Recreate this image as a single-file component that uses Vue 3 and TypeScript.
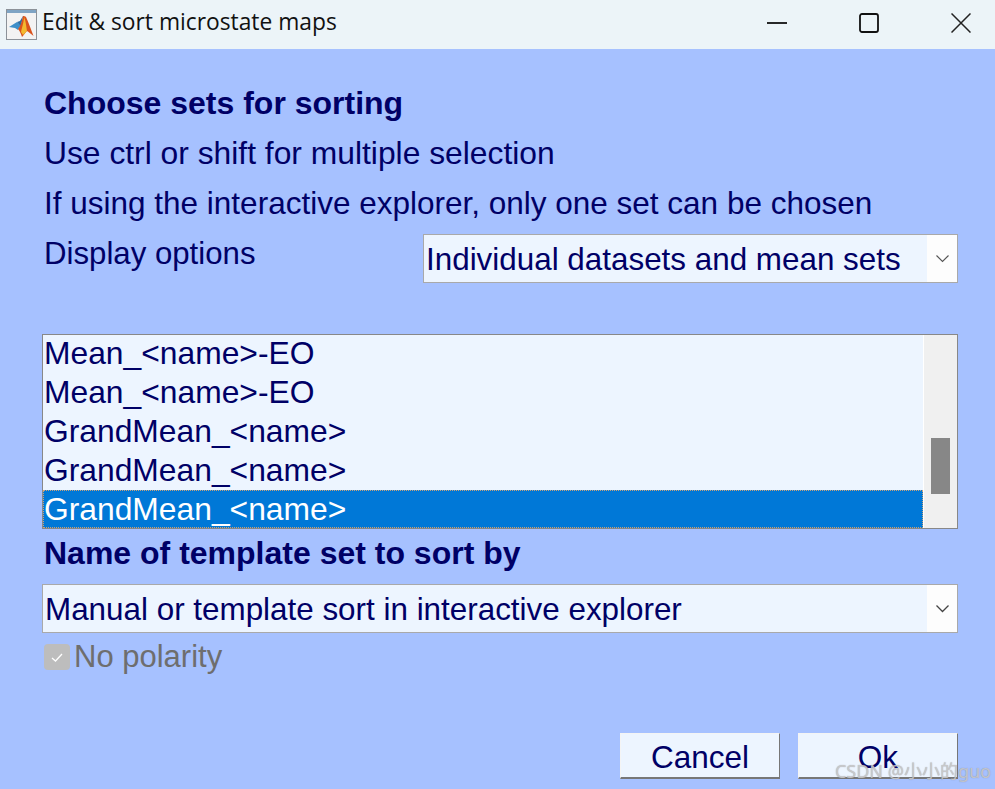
<template>
  <div class="window">
    <header class="titlebar">
      <svg class="app-icon" width="31" height="31" viewBox="0 0 31 31">
        <rect x="0.5" y="0.5" width="30" height="30" fill="#f3f3f3" stroke="#8c9299" />
        <rect x="1" y="1" width="29" height="3" fill="#7fa4c4" />
        <path d="M3 18 L11 13 L15 16 L12 21 L9 19 Z" fill="#3d8fc9" />
        <path d="M11 13 L14 12 L17 7 L15 17 Z" fill="#2c6ea6" />
        <path d="M17 7 C18 7 19 7 20 8 C22 12 25 20 27.500 27 C25 25 23 23 21 22 C19 24 18 26 16 28 C15 25 14 22 12 20 C15 17 16 11 17 7 Z" fill="#d9531e" />
        <path d="M18 8 C18 12 16 19 15 23 L17 26 C19 24 20 23 21 22 C20 17 20 12 18 8 Z" fill="#f3b92f" />
      </svg>
      <span class="title">Edit &amp; sort microstate maps</span>
      <div class="controls">
        <svg width="20" height="20" viewBox="0 0 20 20"><path d="M0 10 H20" stroke="#111" stroke-width="1.800" /></svg>
        <svg width="20" height="20" viewBox="0 0 20 20"><rect x="1" y="1" width="18" height="18" rx="2" fill="none" stroke="#111" stroke-width="1.800" /></svg>
        <svg width="20" height="20" viewBox="0 0 20 20"><path d="M0.500 0.500 L19.500 19.500 M19.500 0.500 L0.500 19.500" stroke="#222" stroke-width="1.500" /></svg>
      </div>
    </header>

    <main class="content">
      <div class="line bold">Choose sets for sorting</div>
      <div class="line wider">Use ctrl or shift for multiple selection</div>
      <div class="line">If using the interactive explorer, only one set can be chosen</div>

      <div class="options-row">
        <div class="line label">Display options</div>
        <div class="select small">
          <span class="value">Individual datasets and mean sets</span>
          <span class="arrow">
            <svg width="13" height="8" viewBox="0 0 13 8"><path d="M0.500 0.500 L6.500 6.500 L12.500 0.500" fill="none" stroke="#555" stroke-width="1.100" /></svg>
          </span>
        </div>
      </div>

      <div class="listbox">
        <ul class="items">
          <li v-for="(item, i) in items" :key="i" :class="{ selected: i === items.length - 1 }">{{ item }}</li>
        </ul>
        <div class="scrollbar"><div class="thumb"></div></div>
      </div>

      <div class="line bold template-label">Name of template set to sort by</div>

      <div class="select wide">
        <span class="value">Manual or template sort in interactive explorer</span>
        <span class="arrow">
          <svg width="13" height="8" viewBox="0 0 13 8"><path d="M0.500 0.500 L6.500 6.500 L12.500 0.500" fill="none" stroke="#444" stroke-width="1.300" /></svg>
        </span>
      </div>

      <div class="check-row">
        <span class="checkbox">
          <svg width="14" height="11" viewBox="0 0 14 11"><path d="M2 6 L5.500 9 L12 2" fill="none" stroke="#fff" stroke-width="1.300" /></svg>
        </span>
        <span class="check-label">No polarity</span>
      </div>

      <div class="buttons">
        <button class="btn">Cancel</button>
        <button class="btn">Ok</button>
      </div>
    </main>

    <div class="watermark">CSDN @小小的guo</div>
  </div>
</template>

<script setup lang="ts">
const items: string[] = [
  'Mean_<name>-EO',
  'Mean_<name>-EO',
  'GrandMean_<name>',
  'GrandMean_<name>',
  'GrandMean_<name>',
];
</script>

<style>
html,
body {
  margin: 0;
  overflow: hidden;
}
</style>

<style scoped>
.window {
  position: relative;
  width: 995px;
  height: 789px;
  background: #a6c1ff;
  overflow: hidden;
  font-family: 'Liberation Sans', Arial, sans-serif;
  color: #000066;
}
.titlebar {
  display: flex;
  align-items: center;
  height: 49px;
  padding-left: 6px;
  padding-bottom: 5px;
  box-sizing: border-box;
  background: #ecf4f8;
  color: #111;
}
.app-icon {
  flex: none;
  margin-right: 5px;
  margin-top: 5px;
}
.title {
  font-family: 'Open Sans', 'Noto Sans', sans-serif;
  font-size: 22.800px;
  line-height: 30px;
  margin-bottom: 1px;
}
.controls {
  display: flex;
  gap: 72px;
  margin-left: auto;
  margin-right: 24px;
  margin-top: 2px;
}
.content {
  padding: 29px 37px 0 42px;
  font-size: 31.500px;
}
.line {
  height: 50px;
  line-height: 50px;
  padding-left: 2px;
  white-space: nowrap;
}
.bold {
  font-weight: 700;
  font-size: 32px;
}
.wider {
  font-size: 31.800px;
}
.label {
  font-size: 31.200px;
  line-height: 51px;
}
.options-row {
  display: flex;
  justify-content: space-between;
  height: 106px;
}
.select {
  display: flex;
  box-sizing: border-box;
  height: 49px;
  border: 1px solid #a9a9a9;
  background: #edf5ff;
  font-size: 31.400px;
}
.small {
  width: 535px;
  margin-top: 6px;
}
.wide {
  width: 916px;
}
.value {
  flex: 1;
  padding-left: 2px;
  line-height: 49px;
  white-space: nowrap;
}
.arrow {
  display: flex;
  align-items: center;
  justify-content: center;
  width: 30px;
  background: #fdfdfd;
}
.listbox {
  display: flex;
  box-sizing: border-box;
  width: 916px;
  height: 195px;
  border: 1px solid #888;
  background: #edf5ff;
  font-size: 31.800px;
}
.items {
  flex: 1;
  margin: 0;
  padding: 0;
  list-style: none;
  border-right: 1px solid #fff;
}
.items li {
  box-sizing: border-box;
  height: 39px;
  line-height: 38px;
  padding-left: 1px;
  white-space: nowrap;
}
.items li:first-child {
  height: 38px;
  line-height: 36px;
}
.items li.selected {
  height: 38px;
  line-height: 36px;
  padding-left: 0;
  background: #0078d7;
  color: #fff;
  border: 1px dotted #c9a27a;
}
.scrollbar {
  box-sizing: border-box;
  width: 33px;
  padding: 103px 7px 0 7px;
  background: #f0f0f0;
}
.thumb {
  height: 56px;
  background: #878787;
}
.template-label {
  height: 55px;
  line-height: 49px;
}
.check-row {
  display: flex;
  align-items: center;
  gap: 4px;
  height: 48px;
  padding-left: 2px;
  color: #6e6e6e;
}
.check-label {
  font-size: 31px;
}
.checkbox {
  display: flex;
  align-items: center;
  justify-content: center;
  width: 26px;
  height: 26px;
  border-radius: 4px;
  background: #bdbdbd;
}
.buttons {
  display: flex;
  justify-content: flex-end;
  gap: 18px;
  margin-top: 52px;
}
.btn {
  width: 160px;
  height: 46px;
  padding: 3px 0 0;
  box-sizing: border-box;
  border: 1px solid #f4f4f4;
  border-right-color: #777;
  border-bottom: 2px solid #777;
  background: #edf5ff;
  font: inherit;
  color: inherit;
}
.watermark {
  position: absolute;
  right: 4px;
  bottom: 6px;
  font-family: 'Noto Sans', 'Noto Sans CJK SC', sans-serif;
  font-size: 18px;
  color: rgba(205, 205, 205, 0.85);
  text-shadow: 0 0 1px rgba(110, 110, 120, 0.6);
  white-space: nowrap;
}
</style>
